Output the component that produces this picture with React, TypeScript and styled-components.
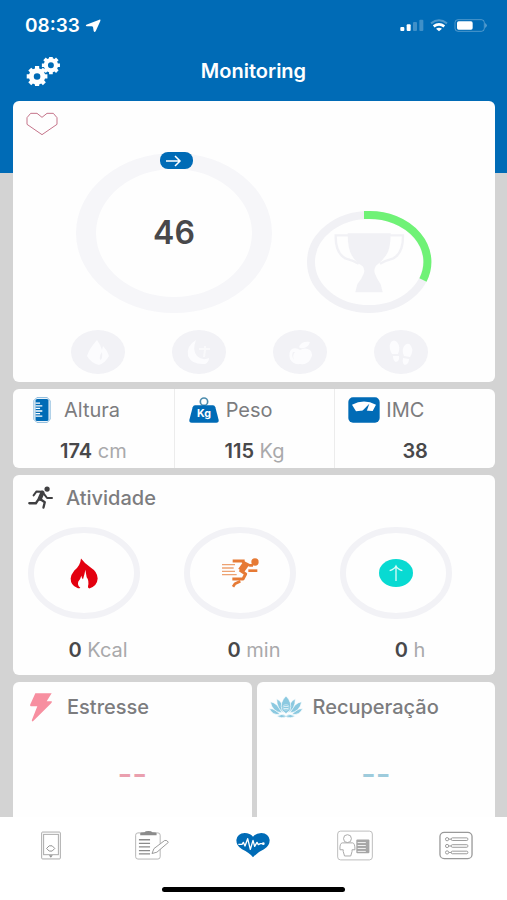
import React from "react";
import styled, { createGlobalStyle } from "styled-components";

const color = {
  blue: "#006bb6",
  backdrop: "#d3d3d3",
  card: "#fefefe",
  ring: "#f2f2f6",
  label: "#7c7c7e",
  value: "#48484a",
  unit: "#a9a9ab",
  divider: "#ececec",
};

const GlobalStyle = createGlobalStyle`
  * { box-sizing: border-box; }
  body {
    margin: 0;
    background: ${color.backdrop};
    font-family: Inter, "Liberation Sans", sans-serif;
  }
  h1, h2, p { margin: 0; }
  svg { display: block; flex: none; }
  button { border: 0; background: none; padding: 0; font: inherit; cursor: pointer; }
`;

const Screen = styled.div`
  display: flex;
  flex-direction: column;
  height: 100vh;
  overflow: hidden;
  background: ${color.backdrop};
`;

const Header = styled.header`
  flex: none;
  padding-bottom: 82px;
  background: ${color.blue};
  color: #fff;
`;

const StatusBar = styled.div`
  display: flex;
  align-items: center;
  justify-content: space-between;
  height: 51px;
  padding: 0 20px 0 25px;
`;

const StatusGroup = styled.div<{ $gap: number }>`
  display: flex;
  align-items: center;
  gap: ${(p) => p.$gap}px;
  font-size: 19px;
  font-weight: 600;
`;

const TitleBar = styled.div`
  display: grid;
  grid-template-columns: 1fr auto 1fr;
  align-items: center;
  height: 40px;
  padding: 0 26px;
`;

const Title = styled.h1`
  font-size: 20px;
  line-height: 24px;
  font-weight: 600;
`;

const GearButton = styled.button`
  justify-self: start;
`;

const Main = styled.main`
  flex: 1;
  min-height: 0;
  display: flex;
  flex-direction: column;
  gap: 7px;
  margin-top: -72px;
  padding: 0 12px 0 13px;
  overflow: hidden;
`;

const Card = styled.section`
  flex: none;
  border-radius: 6px;
  background: ${color.card};
`;

const ScoreCard = styled(Card)`
  padding: 11px 13px 8px;
`;

const RingRow = styled.div`
  display: flex;
  justify-content: center;
  align-items: flex-end;
  gap: 35px;
  margin-top: 16px;
`;

const Ring = styled.div`
  display: grid;
  place-items: center;
  > * { grid-area: 1 / 1; }
`;

const Score = styled.p`
  font-size: 32px;
  line-height: 36px;
  font-weight: 600;
  color: ${color.value};
`;

const BadgeRow = styled.div`
  display: flex;
  justify-content: center;
  gap: 47px;
  margin-top: 16px;
  padding-right: 10px;
`;

const Measures = styled(Card)`
  display: grid;
  grid-template-columns: repeat(3, 1fr);
`;

const Measure = styled.div`
  padding: 5px 0 5px 13px;
  & + & { border-left: 1px solid ${color.divider}; }
`;

const LabelRow = styled.div<{ $gap?: number }>`
  display: flex;
  align-items: center;
  gap: ${(p) => p.$gap ?? 6}px;
  height: 32px;
`;

const IconBox = styled.span<{ $width: number }>`
  display: grid;
  place-items: center;
  flex: none;
  width: ${(p) => p.$width}px;
`;

const Label = styled.h2<{ $weight?: number }>`
  font-size: 20px;
  line-height: 24px;
  font-weight: ${(p) => p.$weight ?? 400};
  color: ${color.label};
`;

const Reading = styled.p`
  font-size: 20px;
  line-height: 24px;
  text-align: center;
  color: ${color.unit};
  b { font-weight: 600; color: ${color.value}; }
`;

const MeasureReading = styled(Reading)`
  margin: 13px 13px 0 0;
`;

const Activity = styled(Card)`
  padding: 7px 7px 13px;
`;

const ActivityGrid = styled.div`
  display: grid;
  grid-template-columns: repeat(3, 1fr);
  margin-top: 13px;
`;

const ActivityRing = styled(Ring)`
  width: 112px;
  margin: 0 0 19px 8px;
`;

const States = styled.div`
  flex: 1;
  display: grid;
  grid-template-columns: 1fr 1fr;
  gap: 5px;
`;

const StateCard = styled(Card)`
  border-radius: 6px 6px 0 0;
  padding: 9px 12px;
`;

const NoData = styled.p<{ $color: string }>`
  margin-top: 33px;
  font-size: 32px;
  line-height: 36px;
  font-weight: 500;
  text-align: center;
  color: ${(p) => p.$color};
`;

const Nav = styled.nav`
  flex: none;
  background: #fff;
`;

const NavItems = styled.div`
  display: grid;
  grid-template-columns: repeat(5, 1fr);
`;

const NavButton = styled.button`
  display: grid;
  place-items: center;
  height: 56px;
`;

const HomeIndicator = styled.div`
  width: 36%;
  height: 5px;
  margin: 14px auto 8px;
  border-radius: 3px;
  background: #000;
`;

function gearPath(cx: number, cy: number, r: number, hole: number) {
  const teeth = 8;
  const pts: string[] = [];
  for (let i = 0; i < teeth; i++) {
    const a = (i * 2 * Math.PI) / teeth;
    const marks: [number, number][] = [
      [-0.26, r * 0.78],
      [-0.2, r],
      [0.2, r],
      [0.26, r * 0.78],
    ];
    marks.forEach(([d, k]) => {
      pts.push(`${(cx + Math.cos(a + d) * k).toFixed(1)} ${(cy + Math.sin(a + d) * k).toFixed(1)}`);
    });
  }
  return `M${pts.join("L")}ZM${cx - hole} ${cy}a${hole} ${hole} 0 1 0 ${hole * 2} 0a${hole} ${hole} 0 1 0 ${-hole * 2} 0Z`;
}

const GearsIcon = () => (
  <svg width="35" height="29" viewBox="78 168 105 88" fill="#fff" fillRule="evenodd" aria-hidden="true">
    <path d={gearPath(111, 227, 32, 10)} />
    <path d={gearPath(153, 193, 28, 9)} />
  </svg>
);

const LocationIcon = () => (
  <svg width="16" height="14" viewBox="256 57 48 42" fill="#fff" aria-hidden="true">
    <path d="M260 74 299 59Q304 58 302 63L288 94Q284 99 282 93L280 81Q279 79 276 79L261 79Q256 77 260 74Z" />
  </svg>
);

const SignalIcon = () => (
  <svg width="24" height="13" viewBox="1199 58 72 39" fill="#fff" aria-hidden="true">
    <rect x="1200" y="82" width="12" height="12" rx="3" />
    <rect x="1219" y="74" width="12" height="20" rx="3" />
    <rect x="1238" y="67" width="12" height="27" rx="3" opacity="0.25" />
    <rect x="1257" y="60" width="12" height="34" rx="3" opacity="0.25" />
  </svg>
);

const WifiIcon = () => (
  <svg width="18" height="13" viewBox="1288 58 54 39" fill="none" stroke="#fff" strokeWidth="6" aria-hidden="true">
    <path d="M1291 71Q1315 53 1339 71" opacity="0.3" />
    <path d="M1299 80Q1315 68 1331 80" strokeWidth="8" />
    <path d="M1306 87Q1315 81 1324 87L1315 95Z" fill="#fff" stroke="none" />
  </svg>
);

const BatteryIcon = () => (
  <svg width="33" height="13" viewBox="1361 58 99 39" aria-hidden="true">
    <rect x="1364" y="60" width="88" height="35" rx="9" fill="none" stroke="#fff" strokeWidth="3" opacity="0.3" />
    <rect x="1370" y="65" width="47" height="25" rx="5" fill="#fff" />
    <path d="M1455 70Q1463 77 1455 85Z" fill="#fff" opacity="0.45" />
  </svg>
);

const HeartOutline = () => (
  <svg width="32" height="24" viewBox="76 336 96 72" fill="none" stroke="#c5748a" strokeWidth="3" strokeLinejoin="round" aria-hidden="true">
    <path d="M124 404 79 373V353L90 340H109L124 352 139 340H158L169 353V373Z" />
  </svg>
);

const ScoreRing = () => (
  <svg width="196" height="162" viewBox="0 0 196 162" aria-hidden="true">
    <path
      fill="#f6f6f9"
      fillRule="evenodd"
      d="M0 81a98 80 0 1 0 196 0a98 80 0 1 0-196 0ZM20 81a78 64 0 1 0 156 0a78 64 0 1 0-156 0Z"
    />
    <rect x="84" y="0" width="33" height="17" rx="8" fill={color.blue} />
    <path d="M90 9h14M99 4l5 5-5 5" fill="none" stroke="#fff" strokeWidth="1.500" />
  </svg>
);

const TrophyRing = () => (
  <svg width="125" height="103" viewBox="0 0 125 103" aria-hidden="true">
    <g fill="none" strokeWidth="8">
      <ellipse cx="62" cy="51" rx="58" ry="47" stroke="#f1f1f5" />
      <path d="M57 4H62A58 47 0 0 1 116 69" stroke="#6ff276" />
    </g>
    <g transform="translate(-37 -21.300) scale(.3333)">
      <path
        fill="#f1f1f5"
        d="M233 131H362Q362 184 346 200Q336 216 318 228Q310 240 315 252Q322 270 332 284L338 308H256L262 284Q275 268 281 252Q286 240 278 230Q256 216 247 200Q233 180 233 131Z"
      />
      <path
        fill="none"
        stroke="#f1f1f5"
        strokeWidth="7"
        d="M236 137H197Q196 190 226 206Q248 212 266 222M359 137H399Q400 190 370 206Q348 212 330 222"
      />
    </g>
  </svg>
);

const Badge = ({ children }: { children: React.ReactNode }) => (
  <svg width="54" height="44" viewBox="0 0 54 44" aria-hidden="true">
    <ellipse cx="27" cy="22" rx="27" ry="22" fill="#f2f2f6" />
    {children}
  </svg>
);

const badges = [
  <path key="drop" fill="#fcfcfe" d="M26 10Q29 14 31 20L32 16Q36 20 38 26Q34 33 28 35Q20 33 16 26Q18 19 26 10ZM31 22Q28 26 29 30Q32 29 31 22Z" />,
  <g key="moon" fill="#fcfcfe">
    <path d="M24 10Q14 16 16 26Q20 35 33 34Q37 32 37 28Q30 31 25 26Q20 20 24 10Z" />
    <path d="M27 18h5v-2h2v2h4v2h-4l-1 7h-2l1-7h-5z" opacity="0.700" />
  </g>,
  <g key="apple" fill="#fcfcfe">
    <path d="M26 17Q28 11 37 12Q35 19 27 18Z" />
    <path d="M27 20Q32 17 37 20Q41 24 37 30Q34 35 27 34Q20 35 17 29Q15 22 19 19Q23 17 27 20ZM20 22Q18 26 21 30Q19 25 22 22Z" fillRule="evenodd" />
  </g>,
  <g key="steps" fill="#fcfcfe">
    <path d="M17 12Q20 9 23 12Q27 17 24 24H18Q14 17 17 12ZM19 26H25Q26 31 22 32Q19 31 19 26Z" />
    <path d="M31 15Q35 12 37 16Q40 21 36 27L30 26Q27 19 31 15ZM29 28L35 29Q35 34 31 35Q28 34 29 28Z" />
  </g>,
];

const RulerIcon = () => (
  <svg width="18" height="26" viewBox="97 47 54 80" aria-hidden="true">
    <path d="M108 49H140L149 58V116L140 125H108L99 116V58Z" fill="none" stroke="#7fb3d9" strokeWidth="3" />
    <rect x="104" y="53" width="40" height="68" rx="5" fill={color.blue} />
    <path d="M104 66h14M104 74h21M104 82h14M104 90h21M104 98h14M104 106h21" stroke="#fff" strokeWidth="4" />
  </svg>
);

const WeightIcon = () => (
  <svg width="30" height="26" viewBox="563 49 90 78" aria-hidden="true">
    <circle cx="608" cy="63" r="11" fill="none" stroke="#4c8cad" strokeWidth="5" />
    <path d="M581 74H635Q640 74 642 80L652 118Q653 126 645 126H571Q563 126 564 118L574 80Q576 74 581 74Z" fill={color.blue} />
    <text x="608" y="108" textAnchor="middle" fontSize="32" fontWeight="700" fill="#fff">Kg</text>
  </svg>
);

const ScaleIcon = () => (
  <svg width="32" height="26" viewBox="294 48 96 78" aria-hidden="true">
    <rect x="295" y="49" width="94" height="76" rx="14" fill={color.blue} />
    <path d="M306 71Q342 52 378 71L368 90Q342 86 318 91Z" fill="#fff" />
    <path d="M336 91 358 68 350 91Z" fill={color.blue} />
  </svg>
);

const RunnerIcon = () => (
  <svg width="25" height="24" viewBox="84 316 76 72" fill="none" stroke="#3f3f41" strokeLinecap="round" strokeLinejoin="round" aria-hidden="true">
    <circle cx="142" cy="325" r="8" fill="#3f3f41" stroke="none" />
    <path d="M101 344 110 332 127 333" strokeWidth="6" />
    <path d="M128 336 120 354" strokeWidth="13" />
    <path d="M133 340 142 352 157 352" strokeWidth="6" />
    <path d="M122 356 135 365 131 381" strokeWidth="7" />
    <path d="M116 356 108 368 88 368" strokeWidth="7" />
  </svg>
);

const RingOutline = () => (
  <svg width="112" height="92" viewBox="0 0 112 92" aria-hidden="true">
    <ellipse cx="56" cy="46" rx="53" ry="43" fill="none" stroke={color.ring} strokeWidth="6" />
  </svg>
);

const FlameIcon = () => (
  <svg width="28" height="31" viewBox="209 143 84 92" fill="#e3000f" aria-hidden="true">
    <path d="M242 144Q252 158 270 170Q292 184 292 204Q291 226 267 234Q262 232 263 227Q267 210 259 200L255 178Q253 192 248 206Q244 204 243 196Q240 208 234 213Q230 224 240 232Q236 235 230 232Q211 224 211 204Q212 192 222 180Q240 166 242 144Z" />
  </svg>
);

const SprintIcon = () => (
  <svg width="38" height="30" viewBox="662 147 114 88" fill="none" stroke="#e67a35" strokeLinejoin="round" aria-hidden="true">
    <circle cx="764" cy="158" r="11" fill="#e67a35" stroke="none" />
    <path d="M665 166h39M665 176h35M665 186h39M665 196h44" strokeWidth="4" opacity="0.700" />
    <path d="M697 155H733" strokeWidth="9" />
    <path d="M738 162 722 184" strokeWidth="20" />
    <path d="M726 157 748 168H758" strokeWidth="8" />
    <path d="M744 184H771" strokeWidth="8" />
    <path d="M718 182 736 194 728 209H696" strokeWidth="9" />
    <path d="M698 232 704 223 720 216" strokeWidth="8" />
  </svg>
);

const UpIcon = () => (
  <svg width="34" height="28" viewBox="384 146 102 84" aria-hidden="true">
    <ellipse cx="435" cy="188" rx="51" ry="42" fill="#08dad2" />
    <path d="M435 212V168M416 181Q430 177 435 167Q440 177 454 181" fill="none" stroke="#d9fbf8" strokeWidth="4" />
  </svg>
);

const BoltIcon = () => (
  <svg width="22" height="29" viewBox="91 69 66 87" fill="#f78fa0" aria-hidden="true">
    <path d="M107 70H156L141 94H156Q158 97 153 101L100 154Q95 155 97 149L113 109H94Q90 108 92 103Z" />
  </svg>
);

const LotusIcon = () => (
  <svg width="34" height="22" viewBox="53 73 102 66" aria-hidden="true">
    <g fill="#8bc9e0" stroke="#fff" strokeWidth="2">
      <path d="M54 111Q72 110 86 128Q64 132 54 111Z" />
      <path d="M154 111Q136 110 122 128Q144 132 154 111Z" />
      <path d="M57 90Q80 94 92 124Q62 120 57 90Z" />
      <path d="M151 90Q128 94 116 124Q146 120 151 90Z" />
      <path d="M76 81Q98 92 98 124Q76 112 76 81Z" />
      <path d="M132 81Q110 92 110 124Q132 112 132 81Z" />
      <path d="M104 73Q124 92 116 116L104 126L92 116Q84 92 104 73Z" />
      <path d="M76 134Q92 124 104 132Q116 124 132 134Q116 142 104 135Q92 142 76 134Z" />
    </g>
    <path d="M97 104h14M97 111h14" stroke="#e6f5fa" strokeWidth="3" />
    <circle cx="104" cy="107" r="9" fill="none" stroke="#c7e6f1" strokeWidth="2" />
  </svg>
);

const PhoneIcon = () => (
  <svg width="20" height="29" viewBox="124 481 61 88" fill="none" stroke="#a9a9a9" strokeWidth="3" aria-hidden="true">
    <rect x="126" y="484" width="57" height="82" rx="3" />
    <rect x="132" y="491" width="45" height="62" />
    <path d="M141 534 149 526H158L166 534 158 542H149Z" stroke="#909090" />
    <path d="M148 555H160L154 562Z" fill="#909090" stroke="none" />
  </svg>
);

const NotesIcon = () => (
  <svg width="34" height="30" viewBox="407 481 104 90" fill="none" stroke="#b5b5b5" strokeWidth="3" aria-hidden="true">
    <rect x="409" y="489" width="75" height="80" rx="7" />
    <path d="M423 496V490Q424 487 436 487Q438 483 448 483Q458 483 460 487Q472 487 473 490V496Z" fill="#8b8b8b" stroke="none" />
    <path d="M419 510h34M419 521h34M419 532h34M419 543h34M419 553h34" stroke="#8b8b8b" strokeWidth="4" />
    <path d="M459 552 465 537 498 512Q505 510 509 518L474 548Z" fill="#fff" stroke="#9a9a9a" />
  </svg>
);

const PulseIcon = () => (
  <svg width="34" height="26" viewBox="0 0 102 78" aria-hidden="true">
    <path d="M51 76Q40 62 18 52Q1 42 1 24Q4 4 26 3Q42 3 51 14Q60 3 76 3Q98 4 101 24Q101 42 84 52Q62 62 51 76Z" fill={color.blue} />
    <path d="M7 37H18L22 31 27 42 35 20 43 52 51 25 56 43 63 31 67 38 73 35H80" fill="none" stroke="#fff" strokeWidth="4" strokeLinejoin="round" />
    <circle cx="82" cy="35" r="4" fill="#fff" />
  </svg>
);

const ProfileIcon = () => (
  <svg width="36" height="31" viewBox="260 479 110 92" fill="none" stroke="#a9a9a9" strokeWidth="3" aria-hidden="true">
    <rect x="262" y="481" width="106" height="88" rx="9" stroke="#bdbdbd" />
    <circle cx="292" cy="504" r="12" />
    <path d="M276 517H308Q315 518 315 538H306V543L302 557H283L279 543V538H269Q268 518 276 517Z" />
    <rect x="319" y="507" width="40" height="42" rx="3" fill="#a6a6a6" stroke="none" />
    <path d="M323 516h25M323 525h25M323 534h25M323 543h25" stroke="#f3f3f3" strokeWidth="3" />
  </svg>
);

const ListIcon = () => (
  <svg width="34" height="29" viewBox="566 481 105 87" fill="none" stroke="#999" strokeWidth="3" aria-hidden="true">
    <rect x="569" y="484" width="99" height="81" rx="13" strokeWidth="4" />
    {[505, 526, 546].map((y) => (
      <g key={y}>
        <circle cx="591" cy={y} r="5" />
        <path d={`M597 ${y}H604`} />
        <rect x="604" y={y - 4} width="51" height="8" rx="3" />
      </g>
    ))}
  </svg>
);

const measures = [
  { label: "Altura", value: "174", unit: "cm", icon: <RulerIcon /> },
  { label: "Peso", value: "115", unit: "Kg", icon: <WeightIcon /> },
  { label: "IMC", value: "38", unit: "", icon: <ScaleIcon /> },
];

const activities = [
  { value: "0", unit: "Kcal", icon: <FlameIcon /> },
  { value: "0", unit: "min", icon: <SprintIcon /> },
  { value: "0", unit: "h", icon: <UpIcon /> },
];

const navItems = [
  { name: "Dispositivo", icon: <PhoneIcon /> },
  { name: "Registros", icon: <NotesIcon /> },
  { name: "Monitoring", icon: <PulseIcon />, current: true },
  { name: "Perfil", icon: <ProfileIcon /> },
  { name: "Menu", icon: <ListIcon /> },
];

export default function App() {
  return (
    <Screen>
      <GlobalStyle />
      <Header>
        <StatusBar>
          <StatusGroup $gap={5}>
            08:33
            <LocationIcon />
          </StatusGroup>
          <StatusGroup $gap={6}>
            <SignalIcon />
            <WifiIcon />
            <BatteryIcon />
          </StatusGroup>
        </StatusBar>
        <TitleBar>
          <GearButton aria-label="Configurações">
            <GearsIcon />
          </GearButton>
          <Title>Monitoring</Title>
        </TitleBar>
      </Header>

      <Main>
        <ScoreCard>
          <HeartOutline />
          <RingRow>
            <Ring>
              <ScoreRing />
              <Score>46</Score>
            </Ring>
            <TrophyRing />
          </RingRow>
          <BadgeRow>
            {badges.map((badge) => (
              <Badge key={badge.key}>{badge}</Badge>
            ))}
          </BadgeRow>
        </ScoreCard>

        <Measures>
          {measures.map((m) => (
            <Measure key={m.label}>
              <LabelRow>
                <IconBox $width={32}>{m.icon}</IconBox>
                <Label>{m.label}</Label>
              </LabelRow>
              <MeasureReading>
                <b>{m.value}</b> {m.unit}
              </MeasureReading>
            </Measure>
          ))}
        </Measures>

        <Activity>
          <LabelRow>
            <IconBox $width={40}>
              <RunnerIcon />
            </IconBox>
            <Label $weight={500}>Atividade</Label>
          </LabelRow>
          <ActivityGrid>
            {activities.map((a) => (
              <div key={a.unit}>
                <ActivityRing>
                  <RingOutline />
                  {a.icon}
                </ActivityRing>
                <Reading>
                  <b>{a.value}</b> {a.unit}
                </Reading>
              </div>
            ))}
          </ActivityGrid>
        </Activity>

        <States>
          <StateCard>
            <LabelRow $gap={10}>
              <IconBox $width={32}>
                <BoltIcon />
              </IconBox>
              <Label $weight={500}>Estresse</Label>
            </LabelRow>
            <NoData $color="#ea9fae">--</NoData>
          </StateCard>
          <StateCard>
            <LabelRow $gap={10}>
              <IconBox $width={34}>
                <LotusIcon />
              </IconBox>
              <Label $weight={500}>Recuperação</Label>
            </LabelRow>
            <NoData $color="#9dcbdc">--</NoData>
          </StateCard>
        </States>
      </Main>

      <Nav>
        <NavItems>
          {navItems.map((item) => (
            <NavButton key={item.name} aria-label={item.name} aria-current={item.current ? "page" : undefined}>
              {item.icon}
            </NavButton>
          ))}
        </NavItems>
        <HomeIndicator />
      </Nav>
    </Screen>
  );
}
